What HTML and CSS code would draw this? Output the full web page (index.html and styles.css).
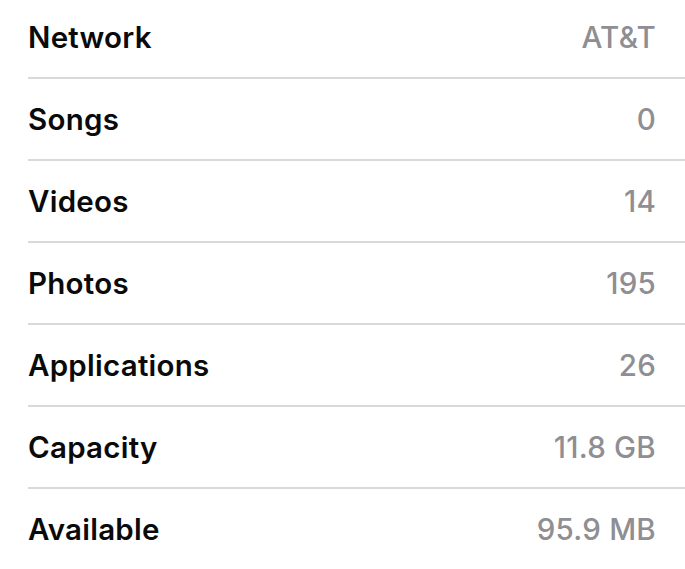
FILE: index.html
```html
<!DOCTYPE html>
<html>
<head>
<meta charset="utf-8">
<link rel="stylesheet" href="styles.css">
</head>
<body>
<div class="list">
  <div class="row"><span class="label">Network</span><span class="value">AT&amp;T</span></div>
  <div class="row"><span class="label">Songs</span><span class="value">0</span></div>
  <div class="row"><span class="label">Videos</span><span class="value">14</span></div>
  <div class="row"><span class="label">Photos</span><span class="value">195</span></div>
  <div class="row"><span class="label">Applications</span><span class="value">26</span></div>
  <div class="row"><span class="label">Capacity</span><span class="value">11.8 GB</span></div>
  <div class="row"><span class="label">Available</span><span class="value">95.9 MB</span></div>
</div>
</body>
</html>
```
FILE: styles.css
```css
html, body {
  margin: 0;
  padding: 0;
  background: #ffffff;
  overflow: hidden;
}
body {
  width: 685px;
  height: 569px;
  font-family: Inter, "Liberation Sans", sans-serif;
}
.list {
  margin-top: -3px;
  padding-left: 28px;
}
.row {
  height: 80px;
  display: flex;
  align-items: center;
  justify-content: space-between;
  padding-right: 29px;
  border-bottom: 2px solid #d9d9dc;
}
.row:last-child {
  border-bottom: none;
}
.label {
  font-size: 29.5px;
  font-weight: 600;
  color: #0a0a0a;
  letter-spacing: 0.25px;
}
.value {
  font-size: 29.5px;
  font-weight: 500;
  color: #8e8e93;
  letter-spacing: 0.25px;
}
```
